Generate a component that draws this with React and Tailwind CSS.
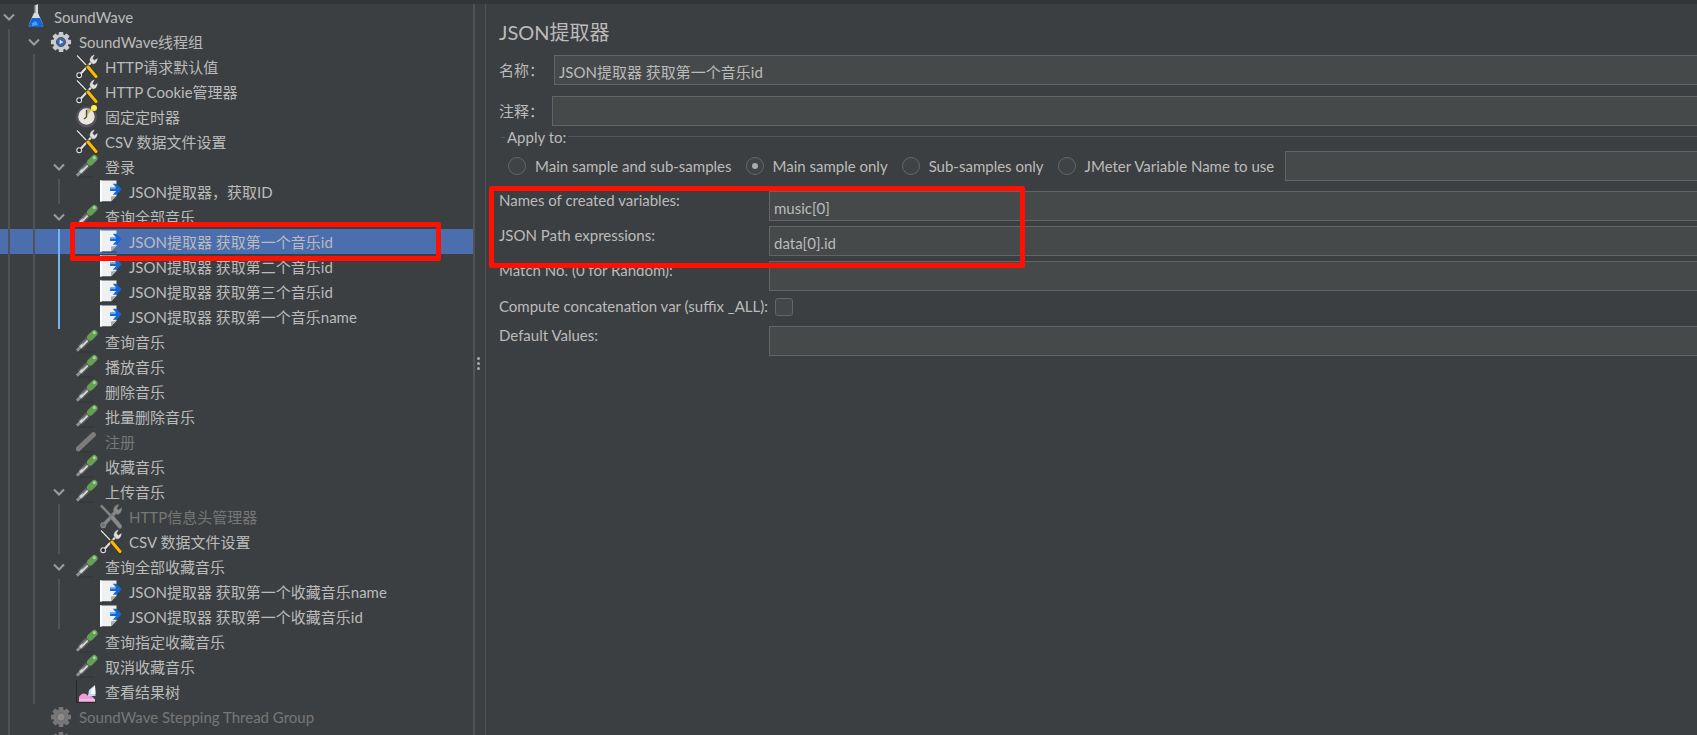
import React from 'react'

function Chevron() {
  return (
    <svg width="12" height="8" viewBox="0 0 12 8" fill="none">
      <path d="M1 1.5 L6 6.5 L11 1.5" stroke="#9a9d9f" strokeWidth="2" />
    </svg>
  )
}

function FlaskIcon() {
  return (
    <svg width="22" height="25" viewBox="0 0 22 25">
      <path d="M9 2 L13 0 L13 9 L18 20 Q19 23 16 23 L6 23 Q3 23 4 20 L9 9 Z" fill="#d6dbe0" />
      <path d="M9 2 L10.5 1.5 L10.5 9 L9 9 Z" fill="#777" />
      <path d="M7 14 L15 14 L18 20 Q19 23 16 23 L6 23 Q3 23 4 20 Z" fill="#1565d8" />
      <path d="M7 19 L11 17 L13 21 L7 22 Z" fill="#49a0f2" />
    </svg>
  )
}

function GearIcon({ off }) {
  const c = off ? '#777777' : '#c8cbd0'
  return (
    <svg width="24" height="24" viewBox="0 0 24 24">
      <g fill={c}>
        <circle cx="12" cy="12" r="8.5" />
        <rect x="9.5" y="1" width="5" height="22" rx="1" />
        <rect x="9.5" y="1" width="5" height="22" rx="1" transform="rotate(45 12 12)" />
        <rect x="9.5" y="1" width="5" height="22" rx="1" transform="rotate(90 12 12)" />
        <rect x="9.5" y="1" width="5" height="22" rx="1" transform="rotate(135 12 12)" />
      </g>
      {off ? (
        <circle cx="12" cy="12" r="4.5" fill="#8c8c8c" stroke="#666" />
      ) : (
        <>
          <circle cx="12" cy="12" r="5" fill="#3a6aa8" stroke="#4a5058" />
          <path d="M10.5 9.5 L14.5 12 L10.5 14.5 Z" fill="#dfe7f2" />
        </>
      )}
    </svg>
  )
}

function ToolsIcon({ off }) {
  const blade = off ? '#8a8a8a' : '#dedede'
  const dark = off ? '#707070' : '#2a2a2a'
  const grip = off ? '#8a8a8a' : '#f5b90f'
  return (
    <svg width="22" height="25" viewBox="0 0 22 25">
      <line x1="1" y1="1.5" x2="12" y2="13" stroke={dark} strokeWidth="2.6" />
      <line x1="1" y1="1.5" x2="12" y2="13" stroke={blade} strokeWidth="1.4" />
      <line x1="3.5" y1="21" x2="16" y2="7.5" stroke={dark} strokeWidth="4" />
      <line x1="3.5" y1="21" x2="16" y2="7.5" stroke={blade} strokeWidth="2.4" />
      <path d="M13.5 7 Q13.5 2 18 0.5 L18.8 1 L16.8 4.5 L18.5 6 L21.8 3.5 Q22 9.5 17 10.5 Z" fill={blade} stroke={dark} strokeWidth="0.5" />
      <circle cx="3.2" cy="21.2" r="2.4" fill={dark} stroke={blade} strokeWidth="1.1" />
      <line x1="12" y1="13" x2="20" y2="22.5" stroke={off ? '#707070' : '#3a3000'} strokeWidth="4.6" strokeLinecap="round" />
      <line x1="12" y1="13" x2="20" y2="22.5" stroke={grip} strokeWidth="3.2" strokeLinecap="round" />
    </svg>
  )
}

function TimerIcon() {
  return (
    <svg width="22" height="25" viewBox="0 0 22 25">
      <circle cx="10.5" cy="13" r="10.5" fill="#57525f" />
      <circle cx="10.5" cy="12.5" r="8.2" fill="#e9e6dc" />
      <path d="M10.5 12.5 L10.5 5 L16 5 Z" fill="#c9b77a" />
      <path d="M10.5 6 L10.5 13 L8 15" fill="none" stroke="#444" strokeWidth="1.3" />
      <circle cx="18" cy="4" r="3" fill="#fff04a" />
    </svg>
  )
}

function PipetteIcon({ off }) {
  return (
    <svg width="24" height="25" viewBox="0 0 24 25">
      <line x1="2" y1="24" x2="20" y2="24" stroke="#323436" strokeWidth="1" />
      {off ? (
        <line x1="2.5" y1="20.5" x2="19" y2="5" stroke="#7c7c7c" strokeWidth="5.5" strokeLinecap="round" />
      ) : (
        <>
          <line x1="1" y1="22.5" x2="6" y2="17.5" stroke="#8f9091" strokeWidth="3.2" />
          <line x1="4.5" y1="19" x2="13" y2="10.5" stroke="#5a5c5e" strokeWidth="6.4" />
          <line x1="4.5" y1="19" x2="13" y2="10.5" stroke="#d4d4d4" strokeWidth="3.2" />
          <line x1="7" y1="15.2" x2="12" y2="10.2" stroke="#3d3f41" strokeWidth="1" />
          <line x1="12.5" y1="11" x2="15" y2="8.5" stroke="#43553f" strokeWidth="6.4" />
          <line x1="15.5" y1="8" x2="20" y2="3.5" stroke="#659f55" strokeWidth="7" strokeLinecap="round" />
          <circle cx="20" cy="3" r="1.6" fill="#a8d998" />
        </>
      )}
    </svg>
  )
}

function DocIcon() {
  return (
    <svg width="24" height="25" viewBox="0 0 24 25">
      <path d="M0 0.5 L18 0.5 L18 17 L12 23.5 L0 23.5 Z" fill="#eef0f2" />
      <path d="M0 0.5 L2 0.5 L2 23.5 L0 23.5 Z" fill="#ffffff" />
      <path d="M12 23.5 L12 18 L18 17 Z" fill="#a9abad" />
      <path d="M2 24 L18 24" stroke="#333537" strokeWidth="1" />
      <path d="M14 4 L18 4 L23.5 10 L18 16 L14 16 L17.5 12 L11 12 L11 8 L17.5 8 Z" fill="#1467d6" />
      <path d="M11 8.8 L17 8.8 L17 9.8 L11 9.8 Z" fill="#6bb0f5" />
    </svg>
  )
}

function ResultIcon() {
  return (
    <svg width="22" height="25" viewBox="0 0 22 25">
      <path d="M0.5 1 L0.5 23.5 L20 23.5" fill="none" stroke="#26282a" strokeWidth="1" />
      <path d="M3 22.5 L3 18 Q6 13 10 15 Q11 17 14 17 Q18 17 19 22.5 Z" fill="#ee9bd8" />
      <path d="M3 22.5 L3 20 L19 20 L19 22.5 Z" fill="#f4b6e4" />
      <path d="M12 17 L13 11 L19 6 L19.5 17 Z" fill="#c5d9f7" />
      <path d="M15 15 L15.5 10.5 L19 7 L19.5 15 Z" fill="#ffffff" />
    </svg>
  )
}

const icons = {
  flask: <FlaskIcon />,
  gear: <GearIcon />,
  gearOff: <GearIcon off />,
  tools: <ToolsIcon />,
  toolsOff: <ToolsIcon off />,
  timer: <TimerIcon />,
  pipe: <PipetteIcon />,
  pipeOff: <PipetteIcon off />,
  doc: <DocIcon />,
  result: <ResultIcon />,
}

// level, icon, label, open = has chevron, g = guides per column
const rows = [
  { level: 0, icon: 'flask', label: 'SoundWave', open: true, g: [] },
  { level: 1, icon: 'gear', label: 'SoundWave线程组', open: true, g: ['a'] },
  { level: 2, icon: 'tools', label: 'HTTP请求默认值', g: ['a', 'a'] },
  { level: 2, icon: 'tools', label: 'HTTP Cookie管理器', g: ['a', 'a'] },
  { level: 2, icon: 'timer', label: '固定定时器', g: ['a', 'a'] },
  { level: 2, icon: 'tools', label: 'CSV 数据文件设置', g: ['a', 'a'] },
  { level: 2, icon: 'pipe', label: '登录', open: true, g: ['a', 'a'] },
  { level: 3, icon: 'doc', label: 'JSON提取器，获取ID', g: ['a', 'a', 'a'] },
  { level: 2, icon: 'pipe', label: '查询全部音乐', open: true, g: ['a', 'a'] },
  { level: 3, icon: 'doc', label: 'JSON提取器 获取第一个音乐id', g: ['a', 'a', 'b'], selected: true },
  { level: 3, icon: 'doc', label: 'JSON提取器 获取第二个音乐id', g: ['a', 'a', 'b'] },
  { level: 3, icon: 'doc', label: 'JSON提取器 获取第三个音乐id', g: ['a', 'a', 'b'] },
  { level: 3, icon: 'doc', label: 'JSON提取器 获取第一个音乐name', g: ['a', 'a', 'b'] },
  { level: 2, icon: 'pipe', label: '查询音乐', g: ['a', 'a'] },
  { level: 2, icon: 'pipe', label: '播放音乐', g: ['a', 'a'] },
  { level: 2, icon: 'pipe', label: '删除音乐', g: ['a', 'a'] },
  { level: 2, icon: 'pipe', label: '批量删除音乐', g: ['a', 'a'] },
  { level: 2, icon: 'pipeOff', label: '注册', g: ['a', 'a'], off: true },
  { level: 2, icon: 'pipe', label: '收藏音乐', g: ['a', 'a'] },
  { level: 2, icon: 'pipe', label: '上传音乐', open: true, g: ['a', 'a'] },
  { level: 3, icon: 'toolsOff', label: 'HTTP信息头管理器', g: ['a', 'a', 'a'], off: true },
  { level: 3, icon: 'tools', label: 'CSV 数据文件设置', g: ['a', 'a', 'a'] },
  { level: 2, icon: 'pipe', label: '查询全部收藏音乐', open: true, g: ['a', 'a'] },
  { level: 3, icon: 'doc', label: 'JSON提取器 获取第一个收藏音乐name', g: ['a', 'a', 'a'] },
  { level: 3, icon: 'doc', label: 'JSON提取器 获取第一个收藏音乐id', g: ['a', 'a', 'a'] },
  { level: 2, icon: 'pipe', label: '查询指定收藏音乐', g: ['a', 'a'] },
  { level: 2, icon: 'pipe', label: '取消收藏音乐', g: ['a', 'a'] },
  { level: 2, icon: 'result', label: '查看结果树', g: ['a', 'a'] },
  { level: 1, icon: 'gearOff', label: 'SoundWave Stepping Thread Group', g: ['a'], off: true },
  { level: 1, icon: 'gearOff', label: '', g: ['a'], off: true },
]

const cellWidths = ['w-[25px]', 'w-[25px]', 'w-[26px]', 'w-[24px]']

function Cell({ index, guide, chevron }) {
  return (
    <span className={`${cellWidths[index]} h-full shrink-0 flex`}>
      <span className="w-[18px] h-full flex items-center justify-center">
        {chevron && <Chevron />}
        {guide === 'a' && <span className="w-[2px] h-full bg-[#505355]" />}
        {guide === 'b' && <span className="w-[2px] h-full bg-[#6eb4f7]" />}
      </span>
    </span>
  )
}

function TreeRow({ row }) {
  return (
    <div className={`flex items-center h-[25px] shrink-0 ${row.selected ? 'bg-[#4b6eaf]' : ''}`}>
      {row.g.map((guide, i) => (
        <Cell key={i} index={i} guide={guide} />
      ))}
      <Cell index={row.level} chevron={row.open} />
      <span className="w-[22px] h-[25px] shrink-0 flex items-center justify-center">{icons[row.icon]}</span>
      <span className={`ml-[7px] pt-[2px] text-[15px] leading-[23px] whitespace-nowrap ${row.off ? 'text-[#777777]' : 'text-[#bbbbbb]'}`}>
        {row.label}
      </span>
    </div>
  )
}

function Radio({ label, checked }) {
  return (
    <label className="flex items-center gap-[9px] whitespace-nowrap">
      <span className="w-[18px] h-[18px] rounded-full border border-[#646769] bg-[#3f4345] flex items-center justify-center">
        {checked && <span className="w-[6px] h-[6px] rounded-full bg-[#a9abad]" />}
      </span>
      {label}
    </label>
  )
}

function Field({ value, className = '' }) {
  return (
    <input
      readOnly
      defaultValue={value}
      className={`h-[30px] min-w-0 flex-1 bg-[#45494a] border border-r-0 border-[#646464] pl-[4px] pt-[3px] text-[15px] text-[#bbbbbb] outline-none ${className}`}
    />
  )
}

function VarRow({ label, value }) {
  return (
    <div className="flex items-start h-[30px]">
      <span className="w-[270px] shrink-0 leading-[18px] whitespace-nowrap">{label}</span>
      <Field value={value} />
    </div>
  )
}

export default function App() {
  return (
    <div className="relative w-full h-[735px] overflow-hidden flex flex-col bg-[#3c3f41] text-[#bbbbbb] font-['Lato','Noto_Sans_CJK_SC',sans-serif]">
      <div className="h-[4px] shrink-0 bg-[#333638]" />
      <div className="flex flex-1 min-h-0">
        <div className="w-[473px] shrink-0 flex flex-col overflow-hidden">
          {rows.map((row, i) => (
            <TreeRow key={i} row={row} />
          ))}
        </div>

        <div className="w-[13px] shrink-0 border-l-2 border-r border-[#505355] flex flex-col items-start pl-[2px] justify-center gap-[2px] pb-[12px]">
          <span className="w-[3px] h-[3px] rounded-full bg-[#aaaaaa]" />
          <span className="w-[3px] h-[3px] rounded-full bg-[#aaaaaa]" />
          <span className="w-[3px] h-[3px] rounded-full bg-[#aaaaaa]" />
        </div>

        <div className="flex-1 min-w-0 flex flex-col pl-[13px] text-[15px]">
          <h1 className="mt-[16px] h-[24px] text-[20px] leading-[24px] font-normal text-[#bbbbbb]">JSON提取器</h1>

          <div className="flex items-center mt-[11px]">
            <span className="w-[55px] shrink-0">名称：</span>
            <Field value="JSON提取器 获取第一个音乐id" />
          </div>
          <div className="flex items-center mt-[11px]">
            <span className="w-[53px] shrink-0">注释：</span>
            <Field />
          </div>

          <div className="flex items-center h-[20px] mt-[1px] pl-[2px]">
            <span className="w-[4px] h-px bg-[#555759]" />
            <span className="mx-[2px]">Apply to:</span>
            <span className="flex-1 h-px bg-[#555759] -mt-[2px]" />
          </div>

          <div className="flex items-center gap-[14px] mt-[4px] pl-[9px]">
            <Radio label="Main sample and sub-samples" />
            <Radio label="Main sample only" checked />
            <Radio label="Sub-samples only" />
            <Radio label="JMeter Variable Name to use" />
            <Field className="-ml-[3px]" />
          </div>

          <div className="flex flex-col gap-[5px] mt-[10px]">
            <VarRow label="Names of created variables:" value="music[0]" />
            <VarRow label="JSON Path expressions:" value="data[0].id" />
            <VarRow label="Match No. (0 for Random):" />
          </div>

          <div className="flex items-center h-[35px] pb-[4px]">
            <span className="w-[276px] shrink-0 whitespace-nowrap">Compute concatenation var (suffix _ALL):</span>
            <span className="w-[18px] h-[18px] rounded-[3px] border border-[#646769] bg-[#43474a]" />
          </div>

          <VarRow label="Default Values:" />
        </div>
      </div>

      {/* red annotation boxes drawn over the screenshot */}
      <div className="absolute left-[70px] top-[222px] w-[371px] h-[39px] border-[5px] border-[#ff1000] rounded-[2px]" />
      <div className="absolute left-[489px] top-[186px] w-[536px] h-[82px] border-[5px] border-[#ff1000] rounded-[2px]" />
    </div>
  )
}
